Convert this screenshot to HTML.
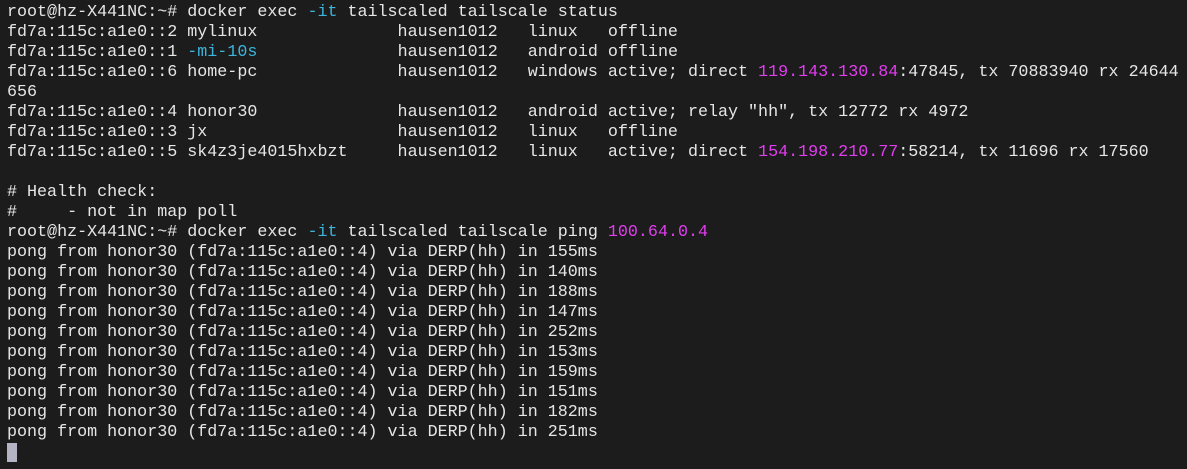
<!DOCTYPE html>
<html><head><style>
html,body{margin:0;padding:0;background:#1c1c1c;width:1187px;height:469px;overflow:hidden}
pre{margin:0;padding:3px 0 0 7px;font-family:"Liberation Mono","DejaVu Sans Mono",monospace;font-size:16.7px;line-height:20px;color:#e6e6e6;white-space:pre}
.c{color:#3cb4dc}.m{color:#e23cf0}
.cur{display:inline-block;width:10px;height:19px;background:#b4b4c4;vertical-align:top}
</style></head><body><pre>root@hz-X441NC:~# docker exec <span class="c">-it</span> tailscaled tailscale status
fd7a:115c:a1e0::2 mylinux              hausen1012   linux   offline
fd7a:115c:a1e0::1 <span class="c">-mi-10s</span>              hausen1012   android offline
fd7a:115c:a1e0::6 home-pc              hausen1012   windows active; direct <span class="m">119.143.130.84</span>:47845, tx 70883940 rx 24644
656
fd7a:115c:a1e0::4 honor30              hausen1012   android active; relay "hh", tx 12772 rx 4972
fd7a:115c:a1e0::3 jx                   hausen1012   linux   offline
fd7a:115c:a1e0::5 sk4z3je4015hxbzt     hausen1012   linux   active; direct <span class="m">154.198.210.77</span>:58214, tx 11696 rx 17560

# Health check:
#     - not in map poll
root@hz-X441NC:~# docker exec <span class="c">-it</span> tailscaled tailscale ping <span class="m">100.64.0.4</span>
pong from honor30 (fd7a:115c:a1e0::4) via DERP(hh) in 155ms
pong from honor30 (fd7a:115c:a1e0::4) via DERP(hh) in 140ms
pong from honor30 (fd7a:115c:a1e0::4) via DERP(hh) in 188ms
pong from honor30 (fd7a:115c:a1e0::4) via DERP(hh) in 147ms
pong from honor30 (fd7a:115c:a1e0::4) via DERP(hh) in 252ms
pong from honor30 (fd7a:115c:a1e0::4) via DERP(hh) in 153ms
pong from honor30 (fd7a:115c:a1e0::4) via DERP(hh) in 159ms
pong from honor30 (fd7a:115c:a1e0::4) via DERP(hh) in 151ms
pong from honor30 (fd7a:115c:a1e0::4) via DERP(hh) in 182ms
pong from honor30 (fd7a:115c:a1e0::4) via DERP(hh) in 251ms
<span class="cur"></span></pre></body></html>
